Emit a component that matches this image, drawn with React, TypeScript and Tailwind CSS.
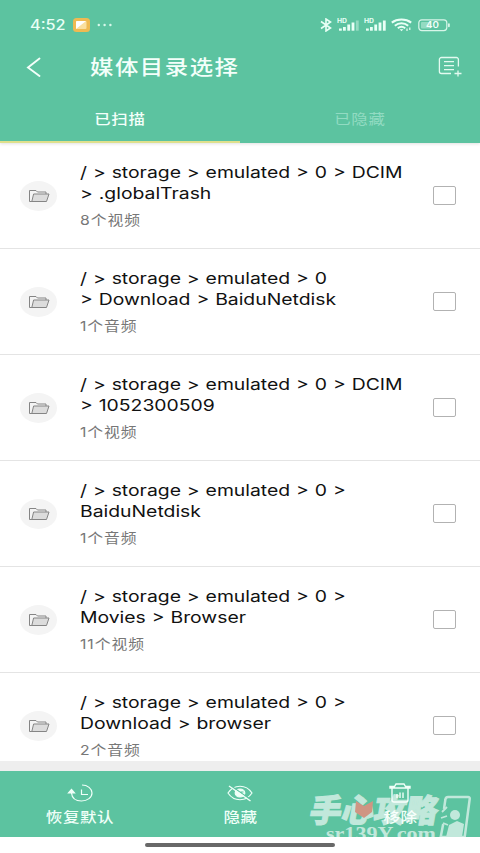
import type { ReactNode } from "react";

const FONT = "font-['Inter','Noto_Sans_CJK_SC',sans-serif]";

const FOLDERS = [
  { lines: ["/ > storage > emulated > 0 > DCIM", "> .globalTrash"], count: "8个视频" },
  { lines: ["/ > storage > emulated > 0", "> Download > BaiduNetdisk"], count: "1个音频" },
  { lines: ["/ > storage > emulated > 0 > DCIM", "> 1052300509"], count: "1个视频" },
  { lines: ["/ > storage > emulated > 0 >", "BaiduNetdisk"], count: "1个音频" },
  { lines: ["/ > storage > emulated > 0 >", "Movies > Browser"], count: "11个视频" },
  { lines: ["/ > storage > emulated > 0 >", "Download > browser"], count: "2个音频" },
];

function SignalBars({ faded }: { faded?: boolean }) {
  return (
    <svg width="22" height="14" viewBox="0 0 22 14" fill="#e9fff6">
      <text x="0" y="5" fontSize="5.5" fontWeight="700" textLength="10" lengthAdjust="spacingAndGlyphs">HD</text>
      <rect x="2" y="10.5" width="2.8" height="2.2" />
      <rect x="6" y="9" width="2.8" height="3.7" />
      <rect x="10.3" y="6.5" width="2.8" height="6.2" />
      <rect x="14.6" y="4.5" width="2.8" height="8.2" />
      <rect x="18.9" y="2.5" width="2.8" height="10.2" opacity={faded ? 0.4 : 1} />
    </svg>
  );
}

function StatusBar() {
  return (
    <div className="flex h-[50px] items-center pl-[30px] pr-[29px] text-[#e9fff6]">
      <span className="w-[35px] text-[14px] font-medium leading-none">
        <span className="inline-block origin-left scale-x-[1.16]">4:52</span>
      </span>
      <svg className="ml-[8px]" width="17" height="14" viewBox="0 0 17 14">
        <rect width="17" height="14" rx="3.5" fill="#efba52" />
        <rect x="3" y="3" width="10.5" height="8" rx="1" fill="#fae0a0" />
        <path d="M3.5 3H13L3 11V3.5z" fill="#fff" />
      </svg>
      <svg className="ml-[7px]" width="16" height="4" viewBox="0 0 16 4" fill="#d8f8ea">
        <circle cx="1.8" cy="2" r="1.2" />
        <circle cx="7.6" cy="2" r="1.2" />
        <circle cx="13.4" cy="2" r="1.2" />
      </svg>
      <div className="ml-auto flex items-center">
        <svg width="12" height="14" viewBox="0 0 12 14" fill="none" stroke="currentColor" strokeWidth="1.6">
          <path d="M1 3.5l9.5 6.5-4.5 3V1l4.5 3L1 10.5" />
        </svg>
        <div className="ml-[5px]"><SignalBars faded /></div>
        <div className="ml-[5px]"><SignalBars /></div>
        <svg className="ml-[5px]" width="21" height="14" viewBox="0 0 21 14" fill="none" stroke="currentColor" strokeWidth="2">
          <path d="M.8 4.6C6.2.5 14.8.5 20.2 4.6" />
          <path d="M3.8 7.7c4-3.3 9.4-3.3 13.4 0" />
          <path d="M6.8 10.3c2.2-1.8 5.2-1.8 7.4 0" />
          <path d="M8.6 11.2h3.8l-1.9 2z" fill="currentColor" stroke="none" />
          <path d="M16 10.5V13M18.8 9.5V12" strokeWidth="1.2" />
        </svg>
        <svg className="ml-[6px]" width="33" height="13" viewBox="0 0 33 13">
          <rect x=".8" y=".8" width="28" height="10.8" rx="3" fill="none" stroke="#d8f6e9" strokeWidth="1.2" />
          <rect x="3" y="3" width="10" height="6.5" rx="1" fill="#e9fff6" opacity=".4" />
          <rect x="30" y="4.2" width="1.8" height="4" rx=".9" fill="#d8f6e9" />
          <text x="8" y="9.2" fontSize="8.5" fontWeight="600" fill="#f2fffa" textLength="13" lengthAdjust="spacingAndGlyphs">40</text>
        </svg>
      </div>
    </div>
  );
}

function TitleBar() {
  return (
    <div className="flex h-[34px] items-center pl-[26px] pr-[18px]">
      <svg width="16" height="22" viewBox="0 0 16 22" fill="none" stroke="#f3fffa" strokeWidth="1.9" strokeLinecap="round">
        <path d="M13.5 2.5L2 11.5l11.5 8.5" />
      </svg>
      <h1 className="ml-[48px] mt-px origin-left scale-x-[1.17] whitespace-nowrap text-[20px] font-medium leading-none tracking-[1.3px] text-[#f3fffa]">
        媒体目录选择
      </h1>
      <svg className="ml-auto" width="24" height="22" viewBox="0 0 24 22" fill="none" stroke="#e3faf0" strokeWidth="1.3">
        <path d="M20.4 10.5V3.5a2 2 0 0 0-2-2h-15a2 2 0 0 0-2 2v12a2 2 0 0 0 2 2H13" />
        <path d="M6 5.7h10M6 9.7h10M6 13.7h10M16.5 17.5h7M20 14.5v6" />
      </svg>
    </div>
  );
}

function FolderIcon() {
  return (
    <div className="flex h-[30px] w-[37px] items-center justify-center rounded-[50%] bg-[#f4f4f4]">
      <svg width="22" height="14" viewBox="0 0 22 14" stroke="#858585" strokeWidth="1" strokeLinejoin="round">
        <path d="M4 12.5H1.5V1.5H8l1.5 1.5h8.5V5" fill="none" />
        <path d="M5.6 5H21l-2.5 7.5H3.8z" fill="#dcdcdc" />
      </svg>
    </div>
  );
}

function FolderRow({ lines, count }: { lines: string[]; count: string }) {
  return (
    <li className="flex h-[106px] shrink-0 items-center border-b border-[#e4e4e4] pl-[20px] pr-[24px]">
      <FolderIcon />
      <div className="ml-[23px] flex-1">
        {lines.map((line) => (
          <p
            key={line}
            className="h-[21px] origin-left scale-x-[1.21] whitespace-nowrap text-[16px] leading-[22px] text-[#111] [word-spacing:0.4px]"
          >
            {line}
          </p>
        ))}
        <p className="mt-[7px] origin-left scale-x-[1.17] whitespace-nowrap text-[13.5px] leading-[20px] tracking-[0.8px] text-[#777]">
          {count}
        </p>
      </div>
      <div className="h-[19px] w-[23px] rounded-[2px] border border-[#b2b2b2]" />
    </li>
  );
}

function Action({ label, children }: { label: string; children: ReactNode }) {
  return (
    <button className="flex flex-1 flex-col items-center pt-[10px] text-[#effff8]">
      <span className="flex h-[24px] items-center">{children}</span>
      <span className="scale-x-[1.18] text-[14px] font-medium leading-[23px] tracking-[0.5px]">{label}</span>
    </button>
  );
}

function Watermark() {
  return (
    <svg className="pointer-events-none absolute bottom-0 right-0" width="175" height="46" viewBox="305 791 175 46" fill="#fff">
      <g opacity=".62">
        <g transform="translate(312 824) skewX(-10)" fontSize="32" fontWeight="900" stroke="#fff" strokeWidth="1.1">
          <text x="-4" y="-2" textLength="128" lengthAdjust="spacingAndGlyphs">手心攻略</text>
        </g>
        <text x="326" y="840" fontSize="19" fontWeight="700" fontFamily="Liberation Serif, serif" textLength="110" lengthAdjust="spacingAndGlyphs">
          sr139Y.com
        </text>
        <path d="M444 809l1.3-9q.3-3 2.7-3h20q2 0 1.7 2l-5 38h-24l2.5-13" fill="none" stroke="#fff" strokeWidth="2.5" />
        <path d="M442 812l5-5M441 818l6-2M443 823l5 2" stroke="#fff" strokeWidth="1.8" />
        <circle cx="455" cy="815" r="5" />
        <path d="M446 837l3-12 8-4 7 3-2 13z" />
      </g>
      <path d="M356 801l8 5 9-5-1 11-8 6-9-6z" fill="#cf9583" />
    </svg>
  );
}

export default function App() {
  return (
    <div className={`flex h-[853px] w-[480px] flex-col overflow-hidden bg-white ${FONT}`}>
      <header className="relative z-10 h-[143px] shrink-0 bg-[#5cc3a0] shadow-[0_1px_3px_rgba(0,0,0,0.12)]">
        <StatusBar />
        <TitleBar />
        <nav className="flex h-[59px] text-[14px] leading-none text-[#f3fffa]">
          <div className="flex flex-1 items-center justify-center border-b-2 border-[#dfe08c] pt-[12px]">
            <span className="scale-x-[1.17] font-medium tracking-[0.6px]">已扫描</span>
          </div>
          <div className="flex flex-1 items-center justify-center pt-[10px] text-[#92dbc2]">
            <span className="scale-x-[1.17] tracking-[0.6px]">已隐藏</span>
          </div>
        </nav>
      </header>

      <ul className="flex h-[618px] shrink-0 flex-col overflow-hidden">
        {FOLDERS.map((folder) => (
          <FolderRow key={folder.lines.join("")} {...folder} />
        ))}
      </ul>
      <div className="h-[10px] shrink-0 bg-[#eee]" />

      <footer className="relative flex h-[66px] shrink-0 overflow-hidden bg-[#5cc3a0]">
        <Action label="恢复默认">
          <svg width="26" height="20" viewBox="0 0 26 20" fill="none" stroke="currentColor" strokeWidth="1.2">
            <path d="M15 2c5.5 0 10 3.6 10 8s-4.5 8-10.5 8C9 18 5 15.500 4.500 10" />
            <path d="M1.500 10l3-3.500 3 3.500z" fill="currentColor" />
            <path d="M14.500 6.500v5H21" />
          </svg>
        </Action>
        <Action label="隐藏">
          <svg width="26" height="18" viewBox="0 0 26 18" fill="none" stroke="currentColor" strokeWidth="1.2">
            <path d="M1 9c6-9 18-9 24 0-6 9-18 9-24 0z" />
            <ellipse cx="13" cy="9" rx="4.8" ry="4" fill="currentColor" />
            <path d="M13.5 8h3M3.500 1.500l21.500 15" stroke="#5cc3a0" />
            <path d="M2 2l21.500 15" strokeWidth="1.5" />
          </svg>
        </Action>
        <Action label="移除">
          <svg width="22" height="20" viewBox="0 0 22 20" fill="none" stroke="currentColor" strokeWidth="1.4">
            <path d="M1 5V3.500h4.500L7 1h8l1.500 2.500H21V5zM3 5.500V17q0 2 2 2h12q2 0 2-2V5.500M8 11v4M11 9.500V15M14 9.500V15" />
          </svg>
        </Action>
        <Watermark />
      </footer>
      <div className="flex h-[16px] shrink-0 items-center justify-center">
        <div className="h-[4px] w-[190px] rounded-full bg-[#686868]" />
      </div>
    </div>
  );
}
